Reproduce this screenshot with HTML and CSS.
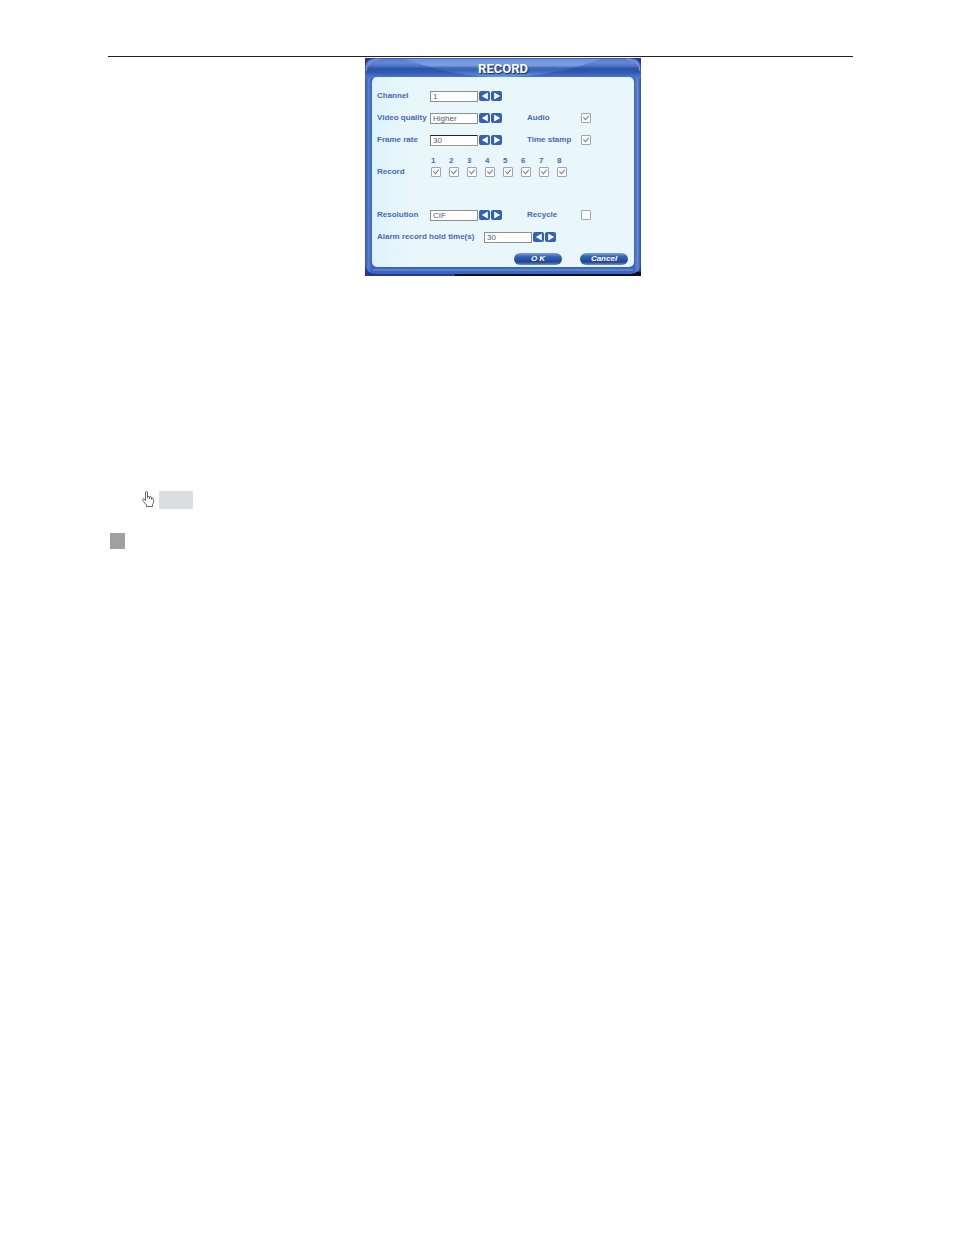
FILE: index.html
```html
<!DOCTYPE html>
<html lang="en">
<head>
<meta charset="utf-8">
<title>Record</title>
<link rel="stylesheet" href="styles.css">
</head>
<body>
<svg class="defs" aria-hidden="true">
  <symbol id="prev" viewBox="0 0 10 10"><path d="M8.500 .5V9.500L1 5Z" fill="#fff"/></symbol>
  <symbol id="next" viewBox="0 0 10 10"><path d="M1.500 .5V9.500L9 5Z" fill="#fff"/></symbol>
</svg>
<main class="page">
  <form class="dialog">
    <svg class="frame" viewBox="0 0 276 218" preserveAspectRatio="none" aria-hidden="true">
      <defs>
        <linearGradient id="bar" x1="0" y1="0" x2="0" y2="1">
          <stop offset="0" stop-color="#5a7ccb"/><stop offset=".2" stop-color="#6289d0"/>
          <stop offset=".38" stop-color="#4a71c4"/><stop offset=".5" stop-color="#2c53ab"/><stop offset=".7" stop-color="#2f59b0"/><stop offset="1" stop-color="#4f7ccf"/>
        </linearGradient>
        <linearGradient id="swoosh" x1="0" y1="0" x2="0" y2="1">
          <stop offset="0" stop-color="#6c90da"/><stop offset=".35" stop-color="#7c9fe0"/><stop offset=".5" stop-color="#3e68ba"/><stop offset=".65" stop-color="#3863b8"/><stop offset="1" stop-color="#6d9be2"/>
        </linearGradient>
        <linearGradient id="side" x1="0" y1="0" x2="1" y2="0">
          <stop offset="0" stop-color="#3156ac"/><stop offset=".012" stop-color="#5b80cf"/><stop offset=".025" stop-color="#3d65bb"/>
          <stop offset=".975" stop-color="#3d65bb"/><stop offset=".988" stop-color="#6288d2"/><stop offset="1" stop-color="#2c4fa4"/>
        </linearGradient>
      </defs>
      <rect width="276" height="218" fill="#26389a"/>
      <path d="M90 214H276V218H90Z" fill="#0b0b2c"/>
      <rect width="276" height="216" rx="10" fill="url(#side)"/>
      <path d="M0 20V12Q0 1 12 1H264Q276 1 276 12V20Z" fill="url(#bar)"/>
      <path d="M40 1Q88 19 138 19Q188 19 236 1Z" fill="url(#swoosh)"/>
      <path d="M1 13Q2 2 14 1M262 1Q274 2 275 13" fill="none" stroke="#a98fd8"/>
      <path d="M8 212H268" stroke="#5b82cf" stroke-width="2"/>
    </svg>
    <h1 class="title">RECORD</h1>
    <div class="panel">
      <div class="row">
        <label for="channel">Channel</label>
        <span class="picker"><input id="channel" class="field" type="text" value="1"><button type="button" class="step" aria-label="Previous channel"><svg><use href="#prev"/></svg></button><button type="button" class="step" aria-label="Next channel"><svg><use href="#next"/></svg></button></span>
      </div>
      <div class="row">
        <label for="quality">Video quality</label>
        <span class="picker"><input id="quality" class="field" type="text" value="Higher"><button type="button" class="step" aria-label="Lower quality"><svg><use href="#prev"/></svg></button><button type="button" class="step" aria-label="Higher quality"><svg><use href="#next"/></svg></button></span>
        <label for="audio">Audio</label>
        <input id="audio" class="check" type="checkbox" checked>
      </div>
      <div class="row">
        <label for="rate">Frame rate</label>
        <span class="picker"><input id="rate" class="field active" type="text" value="30"><button type="button" class="step" aria-label="Lower rate"><svg><use href="#prev"/></svg></button><button type="button" class="step" aria-label="Higher rate"><svg><use href="#next"/></svg></button></span>
        <label for="stamp">Time stamp</label>
        <input id="stamp" class="check" type="checkbox" checked>
      </div>
      <div class="row channels">
        <span id="record">Record</span>
        <div class="boxes" role="group" aria-labelledby="record">
          <label>1<input class="check" type="checkbox" checked></label>
          <label>2<input class="check" type="checkbox" checked></label>
          <label>3<input class="check" type="checkbox" checked></label>
          <label>4<input class="check" type="checkbox" checked></label>
          <label>5<input class="check" type="checkbox" checked></label>
          <label>6<input class="check" type="checkbox" checked></label>
          <label>7<input class="check" type="checkbox" checked></label>
          <label>8<input class="check" type="checkbox" checked></label>
        </div>
      </div>
      <div class="row">
        <label for="resolution">Resolution</label>
        <span class="picker"><input id="resolution" class="field" type="text" value="CIF"><button type="button" class="step" aria-label="Lower resolution"><svg><use href="#prev"/></svg></button><button type="button" class="step" aria-label="Higher resolution"><svg><use href="#next"/></svg></button></span>
        <label for="recycle">Recycle</label>
        <input id="recycle" class="check" type="checkbox">
      </div>
      <div class="row wide">
        <label for="hold">Alarm record hold time(s)</label>
        <span class="picker"><input id="hold" class="field" type="text" value="30"><button type="button" class="step" aria-label="Shorter hold"><svg><use href="#prev"/></svg></button><button type="button" class="step" aria-label="Longer hold"><svg><use href="#next"/></svg></button></span>
      </div>
      <div class="actions">
        <button type="button" class="pill">O K</button>
        <button type="button" class="pill">Cancel</button>
      </div>
    </div>
  </form>
  <div class="note">
    <svg class="hand" viewBox="0 0 12 17" aria-hidden="true">
      <path d="M3.500 10V2Q3.500 .5 4.500 .5T5.500 2V7.500M5.500 5.500Q7.500 4.500 7.500 6.500V8M7.500 6Q9.500 5 9.500 7V8.500M9.500 7Q11.500 6.500 11.500 8.500V11.500L10.500 13.500V15.500H4.500V14L1.500 10.500L.5 8.500Q1 7 2 8L3.500 9.500" fill="#fff" stroke="#444" stroke-width=".8"/>
    </svg>
    <span class="tag"></span>
  </div>
  <div class="marker"></div>
</main>
</body>
</html>
```
FILE: styles.css
```css
* { box-sizing: border-box; }
body { margin: 0; background: #fff; font-family: "Liberation Sans", Arial, sans-serif; }
.defs { position: absolute; width: 0; height: 0; }
.page { margin: 56px 101px 0 108px; border-top: 1px solid #222; }
.dialog {
  position: relative;
  width: 276px;
  margin: 1px 0 0 257px;
  padding: 0 7px 9px;
  color: #4a68b9;
  font-size: 8px;
  font-weight: bold;
  line-height: 12px;
}
.frame { position: absolute; inset: 0; width: 100%; height: 100%; }
.title {
  position: relative;
  margin: 0;
  padding-top: 2px;
  height: 19px;
  font-family: Roboto, "Liberation Sans", sans-serif;
  font-size: 13px;
  line-height: 18px;
  text-align: center;
  color: #fff;
  text-shadow: 1px 1px 1px #1b2d68;
}
.panel {
  position: relative;
  padding: 8px 5px 2px;
  border-radius: 5px;
  background: linear-gradient(90deg, #dcf3fb, #e9f7fa 15%, #e9f7fa);
}
.row {
  display: grid;
  grid-template-columns: 53px 97px 54px 11px;
  align-items: center;
  height: 22px;
  white-space: nowrap;
}
.row.wide { grid-template-columns: 107px 97px; }
.picker { display: flex; align-items: center; gap: 1px; }
.field {
  width: 48px;
  height: 11px;
  padding: 0 2px;
  border: 1px solid #8b8f98;
  background: #fff;
  color: #555c6c;
  font: 8px "Liberation Sans", Arial, sans-serif;
}
.field.active { border-color: #777 #999 #999 #777; border-top-color: #222; }
.step {
  display: block;
  width: 11px;
  height: 10px;
  padding: 1px 2px;
  border: 0;
  border-radius: 2px;
  background: #3560b8;
}
.step svg { display: block; width: 8px; height: 8px; }
.step use { width: 8px; height: 8px; }
.check {
  appearance: none;
  display: grid;
  width: 10px;
  height: 10px;
  margin: 0;
  border: 1px solid #9aa5bd;
  border-radius: 1px;
  background: #fff;
}
.check:checked::before {
  content: "";
  background: #6b7186;
  clip-path: polygon(12% 44%, 22% 38%, 42% 62%, 80% 18%, 90% 26%, 44% 82%);
}
.row.channels { height: 53px; grid-template-columns: 53px auto; align-items: start; padding-top: 4px; }
.channels > span { padding-top: 11px; }
.boxes { display: grid; grid-template-columns: repeat(8, 18px); padding-left: 1px; }
.boxes label { display: block; }
.actions { display: flex; justify-content: flex-end; gap: 18px; padding: 5px 1px 0 0; }
.pill {
  width: 48px;
  height: 12px;
  padding: 0;
  border: 0;
  border-radius: 6px;
  background: linear-gradient(#7f9fdc, #3763b5 30%, #1f458f 75%, #6c91d5);
  color: #fff;
  font: italic bold 8px/12px "Liberation Sans", Arial, sans-serif;
}
.note { display: flex; gap: 5px; margin: 215px 0 0 34px; }
.hand { width: 12px; height: 17px; }
.tag { width: 34px; height: 18px; background: #dcddde; }
.marker { width: 15px; height: 16px; margin: 24px 0 0 2px; background: #a0a0a4; }
```
